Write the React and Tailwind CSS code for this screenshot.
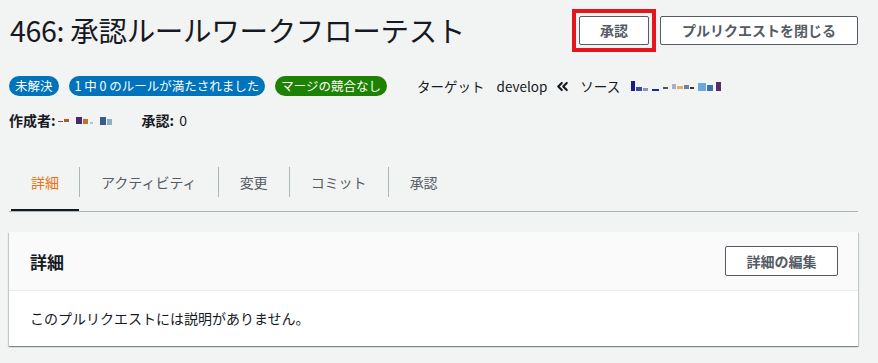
import { ChevronsLeft } from "lucide-react";

const Blur = ({ parts }) => (
  <span className="inline-flex items-end gap-[1px]">
    {parts.map((p, i) => (
      <span key={i} className="inline-block" style={{ width: p[0], height: p[1], background: p[2], marginLeft: p[3] || 0 }} />
    ))}
  </span>
);

const Badge = ({ color, children }) => (
  <span className={`inline-flex h-[20px] items-center rounded-full px-[6px] text-[12.5px] leading-none text-white ${color}`}>
    {children}
  </span>
);

const tabs = ["詳細", "アクティビティ", "変更", "コミット", "承認"];

export default function App() {
  return (
    <div className="min-h-screen bg-[#f2f3f3] font-['Noto_Sans_CJK_JP',sans-serif] text-[#16191f]">
      <div className="pl-[9px] pr-[20px]">
        {/* タイトル行 */}
        <div className="flex items-center justify-between pt-[9px]">
          <h1 className="pl-[1px] text-[28.5px] leading-none font-normal tracking-[-0.3px]">466: 承認ルールワークフローテスト</h1>
          <div className="flex items-center gap-[4px]">
            <div className="border-4 border-[#e5161e] p-[3px]">
              <button className="h-[29px] w-[70px] rounded-[2px] border border-[#545b64] bg-white text-[14px] font-bold text-[#545b64]">
                承認
              </button>
            </div>
            <button className="h-[29px] w-[198px] rounded-[2px] border border-[#545b64] bg-white text-[14px] font-bold text-[#545b64]">
              プルリクエストを閉じる
            </button>
          </div>
        </div>

        {/* バッジ行 */}
        <div className="mt-[24px] flex items-center text-[13.5px]">
          <Badge color="bg-[#0073bb]">未解決</Badge>
          <span className="ml-[10px]" />
          <Badge color="bg-[#0073bb]">1 中 0 のルールが満たされました</Badge>
          <span className="ml-[10px]" />
          <Badge color="bg-[#1d8102]">マージの競合なし</Badge>
          <span className="ml-[30px]">ターゲット</span>
          <span className="ml-[12px]">develop</span>
          <ChevronsLeft className="ml-[7px] h-[17px] w-[17px]" strokeWidth={3} />
          <span className="ml-[9px]">ソース</span>
          <span className="ml-[11px] flex items-center gap-[4px]">
            <Blur parts={[[4, 10, "#1a1a8c"], [6, 4, "#3a4aa0"], [5, 3, "#8a94c0"], [7, 2, "#1a2a8a", 3]]} />
            <Blur parts={[[5, 2, "#555"], [4, 5, "#9fb4c8", 3], [6, 3, "#e0b070"], [5, 4, "#7080a0"], [4, 2, "#333"]]} />
            <Blur parts={[[8, 8, "#6aa8e0"], [6, 6, "#3c70b0"], [5, 9, "#5a2a6a", 2]]} />
          </span>
        </div>

        {/* 作成者行 */}
        <div className="mt-[14px] flex items-center text-[14px]">
          <span className="font-bold">作成者:</span>
          <span className="ml-[2px] flex items-center gap-[7px]">
            <Blur parts={[[5, 1, "#8a4a2a"], [5, 3, "#b05a2a"]]} />
            <Blur parts={[[6, 7, "#4a2a6a"], [5, 5, "#c07030"], [3, 2, "#9ad0e8", 1]]} />
            <Blur parts={[[6, 8, "#3a5a8a"], [5, 6, "#8ab0c8"]]} />
          </span>
          <span className="ml-[30px] font-bold">承認:</span>
          <span className="ml-[5px]">0</span>
        </div>

        {/* タブ */}
        <div className="mt-[36px] flex border-b border-[#aab7b8] pl-[2px]">
          {tabs.map((t, i) => (
            <div key={t} className="flex flex-col">
              <div
                className={`flex h-[30px] items-center text-[14px] ${i > 0 ? "border-l border-[#aab7b8] px-[21px]" : "px-[20px]"} ${
                  i === 0 ? "text-[#ec7211]" : "text-[#545b64]"
                }`}
              >
                {t}
              </div>
              <div className="h-[12px]" />
              <div className={`h-[2px] ${i === 0 ? "bg-[#16191f]" : ""}`} />
            </div>
          ))}
        </div>

        {/* 詳細カード */}
        <div className="mt-[20px] bg-white shadow-[0_1px_1px_0_rgba(0,28,36,0.3),1px_1px_1px_0_rgba(0,28,36,0.15),-1px_1px_1px_0_rgba(0,28,36,0.15)]">
          <div className="flex h-[59px] items-center justify-between border-b border-[#eaeded] bg-[#fafafa] pr-[20px] pl-[21px]">
            <h2 className="text-[17px] font-bold">詳細</h2>
            <button className="h-[30px] w-[113px] rounded-[2px] border border-[#545b64] bg-white text-[14px] font-bold text-[#545b64]">
              詳細の編集
            </button>
          </div>
          <div className="flex h-[55px] items-center px-[21px] text-[14px]">このプルリクエストには説明がありません。</div>
        </div>
      </div>
    </div>
  );
}
